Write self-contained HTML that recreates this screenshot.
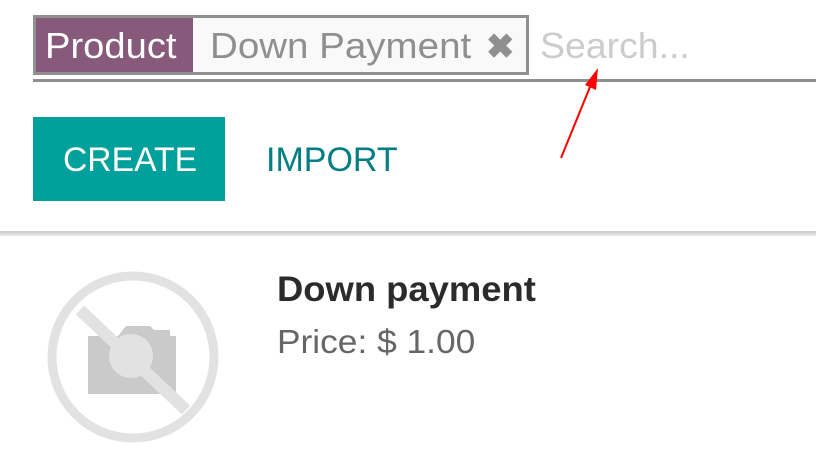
<!DOCTYPE html>
<html><head><style>
body{margin:0;width:816px;height:465px;background:#fff;font-family:"Liberation Sans",sans-serif;position:relative;overflow:hidden}
.a{position:absolute;white-space:nowrap;transform-origin:left}
</style></head><body>
<div class="a" style="left:33px;top:15px;width:490px;height:54px;border:3px solid #909090;background:#f9f9f9"></div>
<div class="a" style="left:36px;top:18px;width:157px;height:54px;background:#875a7b"></div>
<div class="a" style="left:45px;top:25px;font-size:36px;color:#fff;transform:scaleX(1.06)">Product</div>
<div class="a" style="left:210px;top:25px;font-size:36px;color:#8f8f8f;transform:scaleX(1.07)">Down Payment</div>
<div class="a" style="left:486px;top:27px;font-size:34px;color:#8f8f8f;font-weight:bold">✖</div>
<div class="a" style="left:540px;top:25px;font-size:36px;color:#cccccc;transform:scaleX(1.04)">Search...</div>
<div class="a" style="left:33px;top:79px;width:783px;height:3px;background:#909090"></div>
<div class="a" style="left:33px;top:117px;width:192px;height:84px;background:#00a09d"></div>
<div class="a" style="left:63px;top:141px;font-size:34px;color:#fff;transform:scaleX(0.99)">CREATE</div>
<div class="a" style="left:266px;top:141px;font-size:34px;color:#017e84">IMPORT</div>
<div class="a" style="left:0;top:231px;width:816px;height:5px;background:linear-gradient(#ccc,#e8e8e8)"></div>
<svg class="a" style="left:0;top:0" width="816" height="465">
<circle cx="133" cy="357" r="81" fill="none" stroke="#e2e2e2" stroke-width="9"/>
<path d="M88 336h30l8-10h24l4 4h16v6h6v58h-88z" fill="#cacaca"/>
<circle cx="131" cy="356" r="22" fill="#e2e2e2"/>
<line x1="80" y1="310" x2="186" y2="410" stroke="#e2e2e2" stroke-width="12"/>
<line x1="561" y1="158" x2="592" y2="82" stroke="#f00" stroke-width="2"/>
<path d="M598 68l-2 22-11-5z" fill="#f00"/>
</svg>
<div class="a" style="left:277px;top:270px;font-size:35px;font-weight:bold;color:#2b2b2b;transform:scaleX(1.04)">Down payment</div>
<div class="a" style="left:277px;top:323px;font-size:33px;color:#666;transform:scaleX(1.07)">Price: $ 1.00</div>
</body></html>
